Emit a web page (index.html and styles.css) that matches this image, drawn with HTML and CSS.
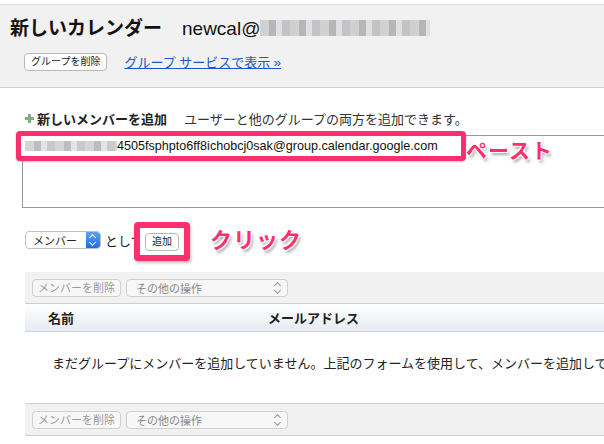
FILE: index.html
```html
<!DOCTYPE html>
<html lang="ja">
<head>
    <meta charset="UTF-8">
    <meta name="viewport" content="width=device-width, initial-scale=1.0">
    <title>新しいカレンダー</title>
    <link rel="stylesheet" href="styles.css">
</head>
<body>

<div class="header">
    <h1>新しいカレンダー<span class="address">newcal@<span class="blur blur-title"></span></span></h1>
    <div class="header-actions">
        <button class="btn">グループを削除</button>
        <a class="link" href="#">グループ サービスで表示 »</a>
    </div>
</div>

<div class="main">
    <div class="add-title">
        <span class="plus"></span>
        <b>新しいメンバーを追加</b>
        <span class="hint">ユーザーと他のグループの両方を追加できます。</span>
    </div>

    <div class="paste-area">
        <div class="textarea"></div>
        <div class="mark mark-paste">
            <span class="blur blur-mail"></span>4505fsphpto6ff8ichobcj0sak@group.calendar.google.com
        </div>
        <span class="note note-paste">ペースト</span>
    </div>

    <div class="role-row">
        <span class="select">メンバー<span class="stepper"></span></span>
        <span class="as">として</span>
        <span class="mark mark-add"><button class="btn">追加</button></span>
        <span class="note note-click">クリック</span>
    </div>

    <div class="toolbar">
        <button class="btn disabled">メンバーを削除</button>
        <span class="select wide disabled">その他の操作<span class="arrows"></span></span>
    </div>
    <div class="table-head">
        <span class="col-name">名前</span>
        <span class="col-mail">メールアドレス</span>
    </div>
    <div class="empty"><p>まだグループにメンバーを追加していません。上記のフォームを使用して、メンバーを追加してください。</p></div>
    <div class="toolbar bottom">
        <button class="btn disabled">メンバーを削除</button>
        <span class="select wide disabled">その他の操作<span class="arrows"></span></span>
    </div>
</div>

</body>
</html>
```

FILE: styles.css
```css
body {
    margin: 0;
    padding-top: 4px;
    background-color: #fff;
    font-family: "Liberation Sans", "Noto Sans CJK JP", sans-serif;
    font-size: 13px;
    color: #222;
    width: 604px;
    overflow: hidden;
}
.header {
    height: 84px;
    box-sizing: border-box;
    padding: 12px 10px 0;
    background-color: #f1f1f1;
    border-top: 1px solid #dcdcdc;
    border-bottom: 1px solid #d0d0d0;
}
h1 {
    margin: 0;
    font-size: 19px;
    line-height: 24px;
    white-space: nowrap;
    color: #111;
}
.address {
    font-weight: normal;
    margin-left: 20px;
}
.blur {
    display: inline-block;
    vertical-align: middle;
    background: repeating-linear-gradient(90deg, #c9c7c9 0 9px, #a9a6aa 9px 16px, #dcdadd 16px 22px, #b8b6ba 22px 30px);
}
.blur-title {
    width: 170px;
    height: 16px;
    margin-top: -3px;
    opacity: 0.8;
}
.header-actions {
    display: flex;
    align-items: center;
    gap: 17px;
    margin-top: 11px;
    padding-left: 14px;
}
.btn {
    font-family: "Liberation Sans", "Noto Sans CJK JP", sans-serif;
    font-size: 10px;
    height: 18px;
    padding: 0 6px;
    background-color: #fff;
    border: 1px solid #b8b8b8;
    border-radius: 4px;
    color: #222;
    line-height: 16px;
}
.btn.disabled {
    color: #999;
    background-color: #f7f7f7;
    border-color: #cfcfcf;
}
.link {
    color: #1a55cc;
    font-size: 13px;
}
.main {
    padding-left: 25px;
}
.add-title {
    margin-top: 20px;
    height: 20px;
    display: flex;
    align-items: center;
    white-space: nowrap;
}
.add-title b {
    margin-left: 3px;
    font-size: 13px;
}
.hint {
    margin-left: 17px;
    color: #333;
}
.plus {
    width: 9px;
    height: 9px;
    background:
        linear-gradient(#7fae86, #7fae86) center / 9px 3px no-repeat,
        linear-gradient(#7fae86, #7fae86) center / 3px 9px no-repeat;
}
.paste-area {
    position: relative;
    margin-top: 7px;
    margin-left: -3px;
}
.textarea {
    width: 620px;
    height: 71px;
    border: 1px solid #999;
    border-right: none;
}
.mark {
    position: absolute;
    border: 5px solid #fd2f6e;
    border-radius: 4px;
    background-color: #fff;
    box-shadow: 0 1px 2px rgba(0, 0, 0, 0.2);
}
.mark-paste {
    left: -6px;
    top: -4px;
    width: 436px;
    height: 20px;
    font-size: 12.6px;
    line-height: 20px;
    padding-left: 4px;
    white-space: nowrap;
    color: #111;
}
.blur-mail {
    width: 92px;
    height: 10px;
    margin-top: -2px;
    opacity: 0.75;
}
.note {
    position: absolute;
    color: #fd2f6e;
    font-family: "Noto Sans CJK JP", sans-serif;
    font-weight: bold;
    font-size: 21px;
    line-height: 26px;
    text-shadow: 1px 1px 0 #fff, -1px -1px 0 #fff, 1px -1px 0 #fff, -1px 1px 0 #fff, 2px 3px 3px rgba(0, 0, 0, 0.35);
    letter-spacing: 1px;
}
.note-paste {
    left: 444px;
    top: 1px;
}
.role-row {
    position: relative;
    display: flex;
    align-items: center;
    margin-top: 23px;
    height: 18px;
}
.select {
    display: inline-flex;
    align-items: center;
    height: 18px;
    box-sizing: border-box;
    padding-left: 7px;
    border: 1px solid #c0c0c0;
    border-radius: 4px;
    background-color: #fff;
    font-size: 11px;
    color: #222;
    width: 76px;
    position: relative;
    overflow: hidden;
}
.stepper {
    position: absolute;
    right: 0;
    top: 0;
    width: 14px;
    height: 16px;
    background: linear-gradient(#5aa2f5, #1c6fe0);
    border-radius: 0 3px 3px 0;
}
.stepper::before,
.stepper::after,
.arrows::before,
.arrows::after {
    content: "";
    position: absolute;
    left: 4px;
    width: 4px;
    height: 4px;
    border-left: 1px solid #fff;
    border-top: 1px solid #fff;
}
.stepper::before,
.arrows::before {
    top: 3px;
    transform: rotate(45deg);
}
.stepper::after,
.arrows::after {
    top: 8px;
    transform: rotate(225deg);
}
.as {
    margin-left: 4px;
    font-size: 13px;
}
.mark-add {
    left: 109px;
    top: -9px;
    width: 44px;
    height: 27px;
    border-width: 6px;
    display: flex;
    align-items: center;
    justify-content: center;
    box-shadow: 1px 2px 3px rgba(0, 0, 0, 0.25);
}
.mark-add .btn {
    height: 18px;
    padding: 0 6px;
}
.note-click {
    left: 185px;
    top: -6px;
    font-size: 22px;
}
.toolbar {
    display: flex;
    align-items: center;
    gap: 5px;
    height: 31px;
    margin-top: 23px;
    padding-left: 7px;
    background-color: #f1f1f1;
    border-bottom: 1px solid #cfcfcf;
}
.toolbar .btn {
    height: 18px;
    font-size: 11px;
    padding: 0 5px;
}
.select.wide {
    width: 162px;
    height: 18px;
    padding-left: 9px;
    font-size: 11px;
    color: #888;
    background-color: #f7f7f7;
    border-color: #cfcfcf;
}
.arrows {
    position: absolute;
    right: 4px;
    top: 0;
    width: 12px;
    height: 16px;
}
.arrows::before,
.arrows::after {
    border-color: #999;
}
.table-head {
    display: flex;
    align-items: center;
    height: 27px;
    border-bottom: 1px solid #cfd3da;
    background: linear-gradient(#fff, #e6eaf1);
    font-weight: bold;
    font-size: 13px;
    white-space: nowrap;
}
.col-name {
    margin-left: 23px;
}
.col-mail {
    margin-left: 194px;
}
.empty {
    height: 71px;
    box-sizing: border-box;
    padding: 22px 0 0 27px;
    overflow: hidden;
}
.empty p {
    margin: 0;
    line-height: 20px;
    white-space: nowrap;
    color: #222;
}
.toolbar.bottom {
    margin-top: 0;
    border-top: 1px solid #cfcfcf;
}
```
